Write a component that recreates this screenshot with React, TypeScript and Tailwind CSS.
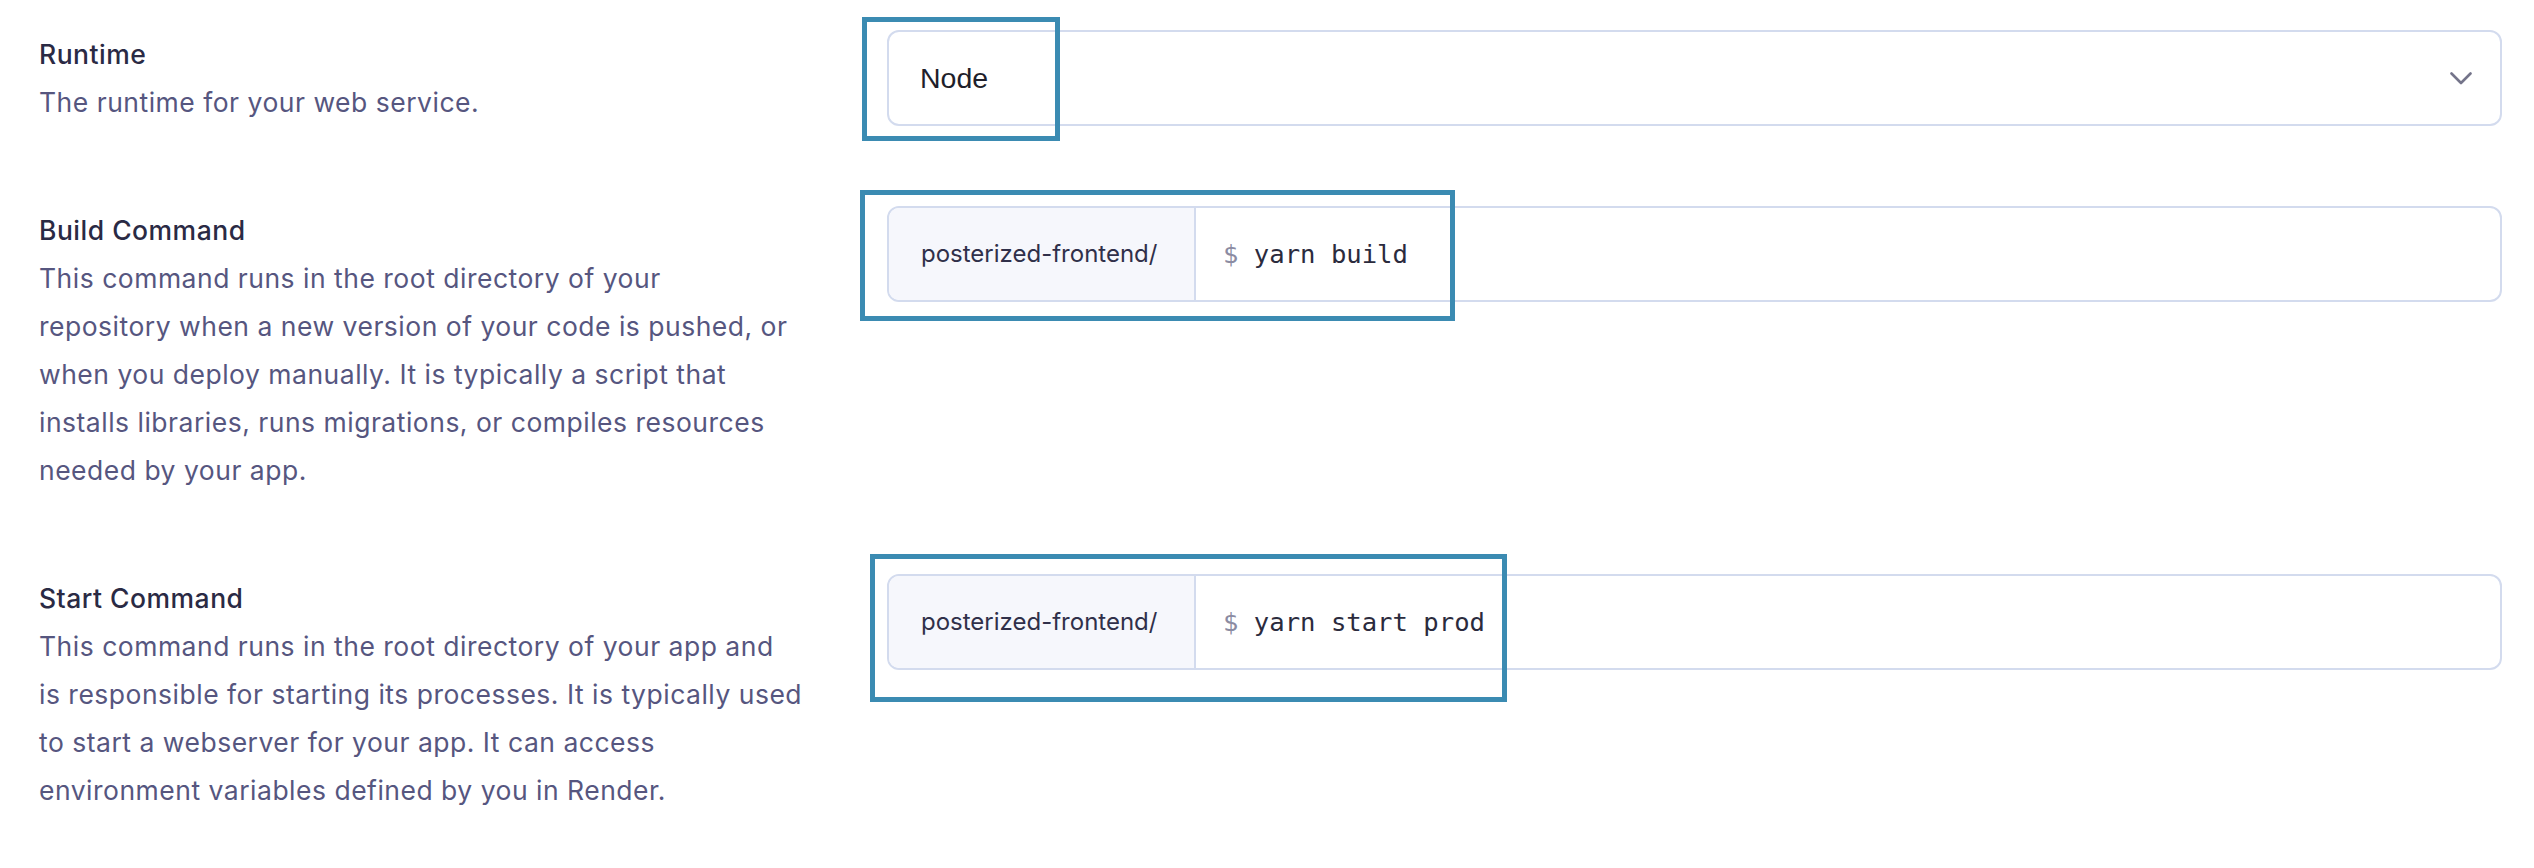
import React from 'react'

type Setting = {
  title: string
  lines: string[]
  kind: 'select' | 'command'
  value: string
  hl: { left: number, top: number, width: number, height: number }
}

const settings: Setting[] = [
  {
    title: 'Runtime',
    lines: ['The runtime for your web service.'],
    kind: 'select',
    value: 'Node',
    hl: { left: -25, top: -13, width: 198, height: 124 },
  },
  {
    title: 'Build Command',
    lines: [
      'This command runs in the root directory of your',
      'repository when a new version of your code is pushed, or',
      'when you deploy manually. It is typically a script that',
      'installs libraries, runs migrations, or compiles resources',
      'needed by your app.',
    ],
    kind: 'command',
    value: 'yarn build',
    hl: { left: -27, top: -16, width: 595, height: 131 },
  },
  {
    title: 'Start Command',
    lines: [
      'This command runs in the root directory of your app and',
      'is responsible for starting its processes. It is typically used',
      'to start a webserver for your app. It can access',
      'environment variables defined by you in Render.',
    ],
    kind: 'command',
    value: 'yarn start prod',
    hl: { left: -17, top: -20, width: 637, height: 148 },
  },
]

function Chevron() {
  return (
    <svg width="22" height="13" viewBox="0 0 22 13" fill="none">
      <polyline points="1.5,1.5 11,11 20.5,1.5" stroke="#74748a" strokeWidth="2.6" strokeLinecap="round" strokeLinejoin="round" />
    </svg>
  )
}

function Field({ s }: { s: Setting }) {
  // the blue rectangles are annotations drawn over the field
  const box = (
    <div
      className="absolute border-[5px] border-[#3b8bb2] pointer-events-none"
      style={{ left: s.hl.left, top: s.hl.top, width: s.hl.width, height: s.hl.height }}
    />
  )

  if (s.kind === 'select') {
    return (
      <div className="relative">
        <div className="flex items-center justify-between h-[96px] border-2 border-[#d3dbee] rounded-[12px] bg-white pl-[31px] pr-[28px]">
          <span className="text-[28.5px] text-[#1f1f2b] font-['Liberation_Sans',Arial,sans-serif]">{s.value}</span>
          <Chevron />
        </div>
        {box}
      </div>
    )
  }

  return (
    <div className="relative">
      <div className="flex h-[96px] border-2 border-[#d3dbee] rounded-[12px] bg-white overflow-hidden">
        <div className="flex items-center w-[307px] shrink-0 bg-[#f6f7fc] border-r-2 border-[#d3dbee] pl-[32px]">
          <span className="text-[24px] text-[#30304a] font-['Inter',sans-serif]">posterized-frontend/</span>
        </div>
        <div className="flex items-center pl-[27px] font-['DejaVu_Sans_Mono',monospace] text-[25.6px]">
          <span className="text-[#8b8ba2]">$</span>
          <span className="text-[#2b2b3d] whitespace-pre"> {s.value}</span>
        </div>
      </div>
      {box}
    </div>
  )
}

export default function App() {
  return (
    <div className="w-full min-h-[868px] bg-white pl-[39px] pr-[32px] pt-[30px] font-['Inter',sans-serif]">
      <div className="flex flex-col gap-[80px]">
        {settings.map((s) => (
          <div key={s.title} className="flex">
            <div className="w-[848px] shrink-0 text-[26.5px] leading-[48px] tracking-[0.5px]">
              <div className="font-medium text-[#2a2a44]">{s.title}</div>
              {s.lines.map((l) => (
                <div key={l} className="text-[#56567f] whitespace-nowrap">{l}</div>
              ))}
            </div>
            <div className="flex-1">
              <Field s={s} />
            </div>
          </div>
        ))}
      </div>
    </div>
  )
}
